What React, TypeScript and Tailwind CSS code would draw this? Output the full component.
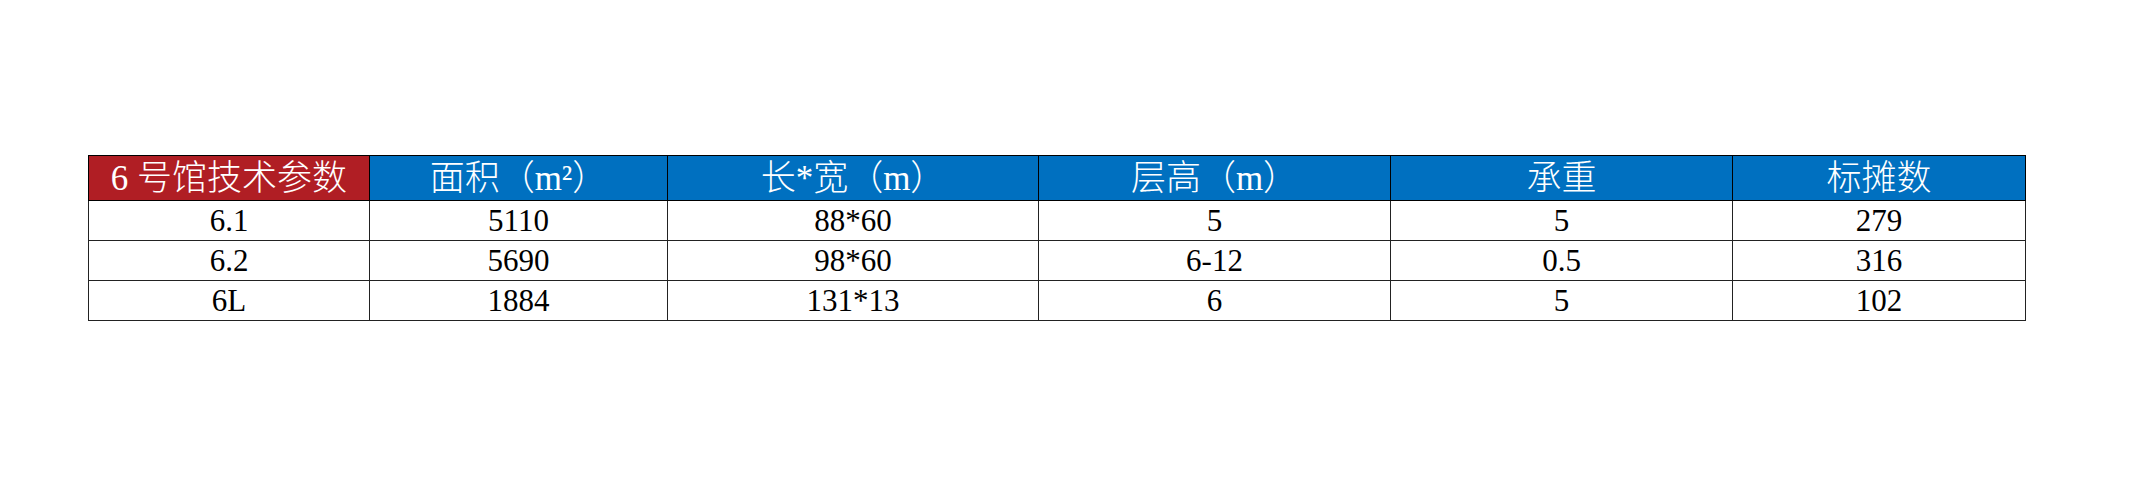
const columns = [
  { label: "面积（m²）", width: "w-[298px]" },
  { label: "长*宽（m）", width: "w-[371px]" },
  { label: "层高（m）", width: "w-[352px]" },
  { label: "承重", width: "w-[342px]" },
  { label: "标摊数", width: "w-[293px]" },
];

const rows = [
  ["6.1", "5110", "88*60", "5", "5", "279"],
  ["6.2", "5690", "98*60", "6-12", "0.5", "316"],
  ["6L", "1884", "131*13", "6", "5", "102"],
];

export default function App() {
  return (
    <div className="h-[489px] w-[2143px] bg-white pl-[88px] pt-[155px] font-['Liberation_Serif','Noto_Sans_CJK_SC',serif]">
      <table className="table-fixed border-collapse">
        <thead>
          <tr className="h-[45px] text-[35px] font-light leading-none text-white">
            <th className="w-[281px] border border-black bg-[#b01e24] p-0 font-light">
              6 号馆技术参数
            </th>
            {columns.map((c) => (
              <th
                key={c.label}
                className={`${c.width} border border-black bg-[#0070c0] p-0 font-light`}
              >
                {c.label}
              </th>
            ))}
          </tr>
        </thead>
        <tbody>
          {rows.map((r) => (
            <tr key={r[0]} className="h-[40px] text-[31px] leading-none text-black">
              {r.map((v, i) => (
                <td key={i} className="border border-[#222] p-0 text-center">
                  {v}
                </td>
              ))}
            </tr>
          ))}
        </tbody>
      </table>
    </div>
  );
}
